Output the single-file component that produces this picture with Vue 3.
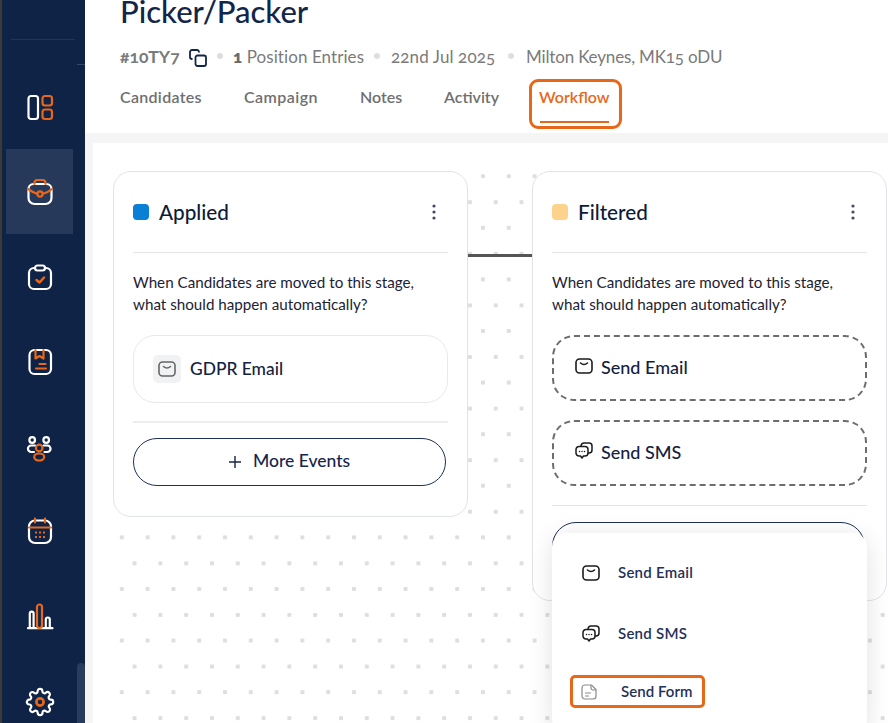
<script setup>
const gear = 'M19.4 15a1.65 1.65 0 0 0 .33 1.82l.06.06a2 2 0 0 1 0 2.83 2 2 0 0 1-2.83 0l-.06-.06a1.65 1.65 0 0 0-1.82-.33 1.65 1.65 0 0 0-1 1.51V21a2 2 0 0 1-2 2 2 2 0 0 1-2-2v-.09A1.65 1.65 0 0 0 9 19.4a1.65 1.65 0 0 0-1.82.33l-.06.06a2 2 0 0 1-2.83 0 2 2 0 0 1 0-2.83l.06-.06a1.65 1.65 0 0 0 .33-1.82 1.65 1.65 0 0 0-1.51-1H3a2 2 0 0 1-2-2 2 2 0 0 1 2-2h.09A1.65 1.65 0 0 0 4.6 9a1.65 1.65 0 0 0-.33-1.82l-.06-.06a2 2 0 0 1 0-2.83 2 2 0 0 1 2.83 0l.06.06a1.65 1.65 0 0 0 1.82.33H9a1.65 1.65 0 0 0 1-1.51V3a2 2 0 0 1 2-2 2 2 0 0 1 2 2v.09a1.65 1.65 0 0 0 1 1.51 1.65 1.65 0 0 0 1.82-.33l.06-.06a2 2 0 0 1 2.83 0 2 2 0 0 1 0 2.83l-.06.06a1.65 1.65 0 0 0-.33 1.82V9a1.65 1.65 0 0 0 1.51 1H21a2 2 0 0 1 2 2 2 2 0 0 1-2 2h-.09a1.65 1.65 0 0 0-1.51 1z'
</script>

<template>
  <div class="app">
    <aside class="side">
      <div class="side-rule"></div>
      <div class="side-tick"></div>
      <div class="nav">
        <div class="nav-item">
          <svg class="ni" viewBox="0 0 30 30"><rect class="w" x="3.500" y="4" width="9.500" height="23" rx="2.500"/><rect class="o" x="17.500" y="4" width="9.500" height="9.500" rx="2.500"/><rect class="o" x="17.500" y="17.500" width="9.500" height="9.500" rx="2.500"/></svg>
        </div>
        <div class="nav-item active">
          <svg class="ni" viewBox="0 0 30 30"><path class="w" d="M3.500 12v9a6 6 0 0 0 6 6h11a6 6 0 0 0 6-6v-9a5 5 0 0 0-5-5h-13a5 5 0 0 0-5 5z"/><path class="o" d="M9.500 7V6a3 3 0 0 1 3-3h5a3 3 0 0 1 3 3v1"/><path class="o" d="M3 12q5 3.500 9 4.700M18 16.700q5-1.200 9-4.700"/><circle class="o" cx="15" cy="17" r="2.600"/></svg>
        </div>
        <div class="nav-item">
          <svg class="ni" viewBox="0 0 30 30"><path class="w" d="M10 6H9a5 5 0 0 0-5 5v11a5 5 0 0 0 5 5h12a5 5 0 0 0 5-5V11a5 5 0 0 0-5-5h-1"/><rect class="w" x="10" y="3.500" width="10" height="5" rx="2.500"/><path class="o t" d="M11.500 18l3 2.500 4.500-5"/></svg>
        </div>
        <div class="nav-item">
          <svg class="ni" viewBox="0 0 30 30"><rect class="w" x="4.500" y="3" width="21.500" height="24" rx="5"/><path class="o" d="M10.500 3v8.500l4-2.500 4 2.500V3"/><path class="o" d="M14.500 17h6M11 21.500h10"/></svg>
        </div>
        <div class="nav-item">
          <svg class="ni" viewBox="0 0 30 30"><circle class="w" cx="7.200" cy="8" r="2.800"/><circle class="w" cx="21.200" cy="8" r="2.800"/><path class="w" d="M10 13.500H6.200a3.200 3.200 0 0 0 0 6.500h2.800M18.500 13.500h3.800a3.200 3.200 0 0 1 0 6.500h-2.800"/><circle class="o" cx="14.200" cy="16" r="3.300"/><ellipse class="o" cx="14.200" cy="25" rx="5" ry="3.500"/></svg>
        </div>
        <div class="nav-item">
          <svg class="ni" viewBox="0 0 30 30"><rect class="w" x="4" y="3.500" width="22" height="22.500" rx="6"/><path class="o" d="M4 10.500h22M10 1.500v4M20 1.500v4"/><path class="od" d="M10 15.500h2M14 15.500h2M18 15.500h2M10 20h2M14 20h2M18 20h2"/></svg>
        </div>
        <div class="nav-item">
          <svg class="ni" viewBox="0 0 30 30"><path class="w" d="M3 26.200h24.500M4.800 26v-14.500a1.900 1.900 0 0 1 3.800 0V26M20.800 26v-8.500a2 2 0 0 1 4 0V26"/><rect class="o" x="12" y="2.500" width="5" height="23.500" rx="2.500"/></svg>
        </div>
        <div class="nav-item">
          <svg class="ni" viewBox="-0.500 -0.500 25 25"><path class="w g" :d="gear"/><circle class="o g2" cx="12" cy="12" r="3"/></svg>
        </div>
      </div>
      <div class="side-scroll"></div>
    </aside>

    <main class="main">
      <header class="head">
        <h1 class="title">Picker/Packer</h1>
        <div class="meta">
          <span class="ref">#10TY7</span>
          <svg class="copy" viewBox="0 0 18 18"><path d="M10 3.500V3a2 2 0 0 0-2-2H3a2 2 0 0 0-2 2v5a2 2 0 0 0 2 2h.5"/><rect x="6.500" y="6.500" width="10.500" height="10.500" rx="2"/></svg>
          <i class="sep s1"></i>
          <span class="entries"><b>1</b> Position Entries</span>
          <i class="sep s2"></i>
          <span class="date">22nd Jul 2025</span>
          <i class="sep s3"></i>
          <span class="place">Milton Keynes, MK15 oDU</span>
        </div>
        <nav class="tabs">
          <span class="tab wide">Candidates</span>
          <span class="tab wider">Campaign</span>
          <span class="tab">Notes</span>
          <span class="tab">Activity</span>
          <span class="tab on">Workflow<em class="mark"></em></span>
        </nav>
      </header>

      <section class="stage">
        <div class="canvas">
          <div class="board">
            <article class="card">
              <div class="card-head">
                <i class="swatch blue"></i>
                <h2>Applied</h2>
                <svg class="kebab" viewBox="0 0 4 16"><circle cx="2" cy="2" r="1.600"/><circle cx="2" cy="8" r="1.600"/><circle cx="2" cy="14" r="1.600"/></svg>
              </div>
              <p class="desc">When Candidates are moved to this stage,<br>what should happen automatically?</p>
              <div class="event">
                <span class="tile">
                  <svg class="mail gray" viewBox="0 0 18 16"><rect x="1" y="1" width="16" height="14" rx="3.500"/><path d="M5.500 5.500q3.500 3 7 0"/></svg>
                </span>
                <span class="event-label">GDPR Email</span>
              </div>
              <div class="rule thick"></div>
              <button class="more">
                <svg class="plus" viewBox="0 0 12 12"><path d="M6 0v12M0 6h12"/></svg>
                <span>More Events</span>
              </button>
            </article>

            <div class="link"></div>

            <article class="card">
              <div class="card-head">
                <i class="swatch amber"></i>
                <h2>Filtered</h2>
                <svg class="kebab" viewBox="0 0 4 16"><circle cx="2" cy="2" r="1.600"/><circle cx="2" cy="8" r="1.600"/><circle cx="2" cy="14" r="1.600"/></svg>
              </div>
              <p class="desc">When Candidates are moved to this stage,<br>what should happen automatically?</p>
              <div class="slot">
                <svg class="mail" viewBox="0 0 18 16"><rect x="1" y="1" width="16" height="14" rx="3.500"/><path d="M5.500 5q3.500 3 7 0"/></svg>
                <span>Send Email</span>
              </div>
              <div class="slot">
                <svg class="sms" viewBox="0 0 18 18"><path d="M6 4.500V4a3 3 0 0 1 3-3h5a3 3 0 0 1 3 3v4a3 3 0 0 1-3 3h-1"/><path d="M4 4.500h6a3 3 0 0 1 3 3V11a3 3 0 0 1-3 3H8.500L7 16l-1.500-2H4a3 3 0 0 1-3-3V7.500a3 3 0 0 1 3-3z"/><path class="dots" d="M4.500 9.500h.01M7 9.500h.01M9.500 9.500h.01"/></svg>
                <span>Send SMS</span>
              </div>
              <div class="rule last"></div>
              <button class="more ghost"></button>

              <div class="menu">
                <div class="menu-item first">
                  <svg class="mail" viewBox="0 0 18 16"><rect x="1" y="1" width="16" height="14" rx="3.500"/><path d="M5.500 5q3.500 3 7 0"/></svg>
                  <span>Send Email</span>
                </div>
                <div class="menu-item second">
                  <svg class="sms" viewBox="0 0 18 18"><path d="M6 4.500V4a3 3 0 0 1 3-3h5a3 3 0 0 1 3 3v4a3 3 0 0 1-3 3h-1"/><path d="M4 4.500h6a3 3 0 0 1 3 3V11a3 3 0 0 1-3 3H8.500L7 16l-1.500-2H4a3 3 0 0 1-3-3V7.500a3 3 0 0 1 3-3z"/><path class="dots" d="M4.500 9.500h.01M7 9.500h.01M9.500 9.500h.01"/></svg>
                  <span>Send SMS</span>
                </div>
                <div class="menu-row">
                  <div class="menu-form">
                    <svg class="form" viewBox="0 0 16 16"><path d="M4 1h6.500L15 5.500V12a3 3 0 0 1-3 3H4a3 3 0 0 1-3-3V4a3 3 0 0 1 3-3z"/><path d="M10 1.500V4a2 2 0 0 0 2 2h2.500M4.500 9h5M4.500 12h3"/></svg>
                    <span>Send Form</span>
                  </div>
                </div>
              </div>
            </article>
          </div>
        </div>
      </section>
    </main>
  </div>
</template>

<style>
html, body { margin: 0; height: 100%; overflow: hidden; background: #fff; }
</style>

<style scoped>
* { box-sizing: border-box; }
.app {
  width: 888px; height: 723px; display: flex; overflow: hidden;
  font-family: Lato, "Open Sans", sans-serif;
  font-variant-numeric: oldstyle-nums;
  color: #14223f;
}
.side {
  position: relative; flex: 0 0 85px; height: 723px; overflow: hidden;
  background: #0f2347; border-left: 2px solid #3b3a36;
  padding-top: 64px;
}
.side-rule { position: absolute; left: 9px; top: 39px; width: 64px; height: 1px; background: #23365a; }
.side-tick { position: absolute; right: 0; top: 64px; width: 8px; height: 1px; background: #33476b; }
.side-scroll { position: absolute; right: 0; top: 663px; width: 8px; height: 60px; background: #2a3c5e; border-radius: 4px 4px 0 0; }
.nav { display: flex; flex-direction: column; }
.nav-item { height: 85px; width: 67px; margin-left: 4px; display: flex; align-items: center; justify-content: center; }
.nav-item.active { background: #26395b; }
.ni { width: 30px; height: 30px; }
.ni .w { fill: none; stroke: #fff; stroke-width: 2.200; stroke-linecap: round; stroke-linejoin: round; }
.ni .o { fill: none; stroke: #e8681a; stroke-width: 2.200; stroke-linecap: round; stroke-linejoin: round; }
.ni .g { stroke-width: 1.800; }
.ni .g2 { stroke-width: 2.200; }
.ni .t { stroke-width: 2.500; }
.ni .od { fill: none; stroke: #e8681a; stroke-width: 2; }

.main { flex: 1; min-width: 0; display: flex; flex-direction: column; }
.head { position: relative; height: 133px; padding-left: 35px; background: #fff; }
.title { margin: -8px 0 0; font-size: 31px; line-height: 38px; font-weight: 500; color: #12264b; }
.meta { display: flex; align-items: center; height: 24px; margin-top: 14px; font-size: 17px; color: #7a7a7a; white-space: nowrap; }
.ref { font-weight: 700; font-size: 17.500px; width: 69px; }
.copy { width: 18px; height: 18px; margin: 4px 0 0 0; fill: none; stroke: #12264b; stroke-width: 1.800; }
.sep { width: 6px; height: 6px; border-radius: 50%; background: #e0dce3; }
.s1 { margin: 0 10px 0 10px; }
.entries { width: 131px; letter-spacing: .08px; }
.entries b { font-weight: 800; color: #6a6a6a; }
.s2 { margin: 0 11px 0 10px; }
.date { width: 105px; letter-spacing: .12px; }
.s3 { margin: 0 12px 0 12px; }
.place { letter-spacing: -.16px; }
.tabs { display: grid; grid-template-columns: 82px 74px 42px 54px 69px; column-gap: 42px; margin-top: 19px; font-size: 16px; font-weight: 600; color: #6f6f6f; }
.tab { position: relative; line-height: 20px; white-space: nowrap; }
.wide { letter-spacing: .3px; }
.wider { letter-spacing: .45px; }
.tab.on { color: #e8681a; margin-left: -1px; }
.tab.on::before {
  content: ""; position: absolute; left: -10px; top: -8px; width: 93px; height: 50px;
  box-sizing: border-box; border: 3px solid #e8681a; border-radius: 9px;
}
.mark { position: absolute; left: 1px; right: 0; top: 34px; height: 2px; background: #e8681a; }

.stage { flex: 1; min-height: 0; background: #f5f5f5; padding: 10px 0 0 8px; }
.canvas { height: 100%; padding: 28px 0 0 20px; overflow: hidden; background: #fff; }
.board {
  height: 100%; display: flex; align-items: flex-start;
  background-image:
    radial-gradient(circle, #dedede 2px, transparent 2.500px),
    radial-gradient(circle, #dedede 2px, transparent 2.500px);
  background-size: 25.800px 51.600px;
  background-position: -4.100px -20.600px, 8.700px 5.400px;
}
.card {
  position: relative; flex: 0 0 355px; background: #fff; border: 1px solid #e2e3e8; border-radius: 18px;
  padding: 0 19px 30px;
}
.card-head { display: flex; align-items: center; height: 81px; border-bottom: 1px solid #e4e4e8; }
.swatch { width: 16px; height: 16px; border-radius: 4px; margin-right: 10px; }
.blue { background: #0a7fd6; }
.amber { background: #fbd38c; }
h2 { flex: 1; margin: 0; padding-bottom: 1px; font-size: 20.700px; font-weight: 500; color: #0e1b36; }
.kebab { width: 4px; height: 16px; margin-right: 12px; fill: #454a66; }
.desc { margin: 18px 0 20px; font-size: 15.200px; line-height: 22px; color: #1c2233; white-space: nowrap; }
.event {
  display: flex; align-items: center; height: 68px; padding-left: 19px;
  border: 1px solid #e8e9ee; border-radius: 22px;
}
.tile { display: flex; align-items: center; justify-content: center; width: 28px; height: 28px; border-radius: 5px; background: #f1f2f4; margin-right: 9px; }
.event-label { padding-bottom: 2px; font-size: 17.400px; font-weight: 500; color: #14223f; }
.slot span { padding-bottom: 2px; font-size: 18px; font-weight: 500; color: #14223f; }
.mail { width: 18px; height: 16px; fill: none; stroke: #1b1b1f; stroke-width: 1.600; stroke-linecap: round; }
.mail.gray { stroke: #666; }
.sms { width: 18px; height: 18px; fill: none; stroke: #1b1b1f; stroke-width: 1.500; stroke-linejoin: round; }
.sms .dots { stroke-width: 1.500; stroke-linecap: round; }
.form { width: 16px; height: 16px; fill: none; stroke: #8a8a8a; stroke-width: 1.200; stroke-linecap: round; }
.rule { height: 2px; background: #eeeef1; margin-top: 18px; }
.more {
  display: flex; align-items: center; justify-content: center; gap: 12px;
  width: 313px; height: 48px; margin-top: 15px; padding: 0;
  background: #fff; border: 1px solid #1f3157; border-radius: 24px;
  font: inherit; font-size: 17.500px; font-weight: 500; color: #14264c;
}
.more span { padding-bottom: 3px; }
.rule.last { height: 1px; margin-top: 19px; background: #e4e4e8; }
.ghost { display: block; margin-top: 16px; }
.plus { width: 12px; height: 12px; fill: none; stroke: #14264c; stroke-width: 1.400; }
.link { flex: 0 0 64px; height: 3px; margin-top: 83px; background: #555; }
.slot {
  display: flex; align-items: center; gap: 8px; height: 66px; padding-left: 21px; width: 315px;
  border: 2px dashed #6d6d6d; border-radius: 22px;
}
.slot + .slot { margin-top: 19px; }
.slot svg { position: relative; top: -2px; }
.menu {
  position: absolute; left: 19px; top: 361px; width: 315px; height: 200px;
  padding-top: 9px; background: #fff; border-radius: 14px;
  box-shadow: 0 4px 24px rgba(0, 0, 0, .12);
}
.menu-item { display: flex; align-items: center; gap: 18px; padding-left: 30px; font-size: 15px; letter-spacing: .25px; font-weight: 600; color: #1f3157; }
.menu-item span { padding-bottom: 2px; }
.first { height: 61px; }
.second { height: 61px; }
.menu-row { height: 57px; padding: 11px 0 0 18px; }
.menu-form {
  display: flex; align-items: center; gap: 24px; width: 135px; height: 33px; padding-left: 8px;
  border: 3px solid #e8681a; border-radius: 5px;
  font-size: 15px; letter-spacing: .05px; font-weight: 600; color: #1f3157;
}
.menu-form span { padding-bottom: 2px; }
</style>
